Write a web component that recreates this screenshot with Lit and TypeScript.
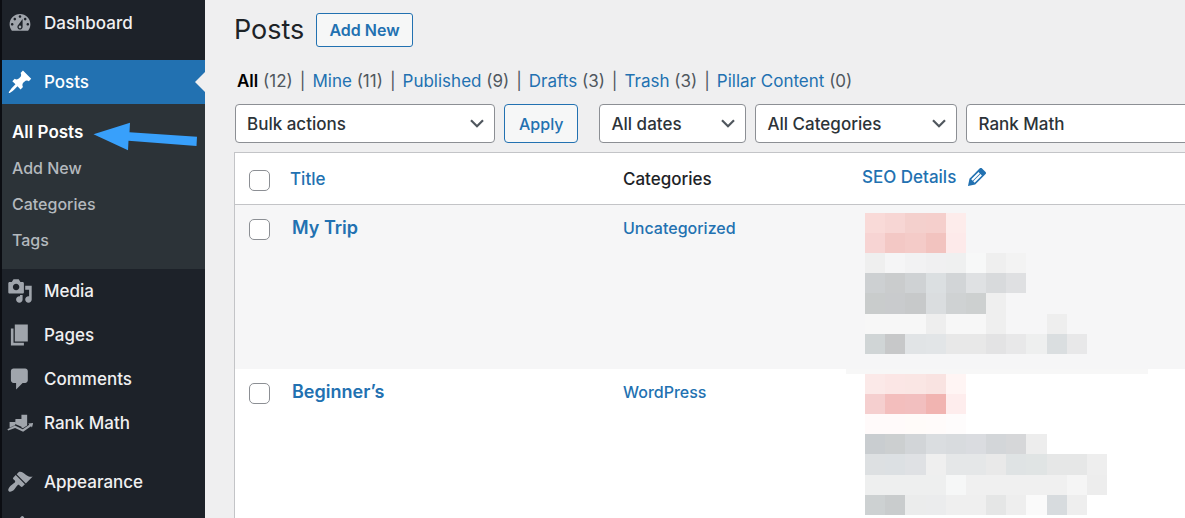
import { LitElement, html, css, svg } from "lit";
import { customElement, property } from "lit/decorators.js";
import { classMap } from "lit/directives/class-map.js";

const ICONS: Record<string, string> = {
  dashboard:
    "M3.76 16h12.48c1.1-1.37 1.76-3.11 1.76-5 0-4.42-3.58-8-8-8s-8 3.58-8 8c0 1.89.66 3.63 1.76 5zM10 4c.55 0 1 .45 1 1s-.45 1-1 1-1-.45-1-1 .45-1 1-1zM6 6c.55 0 1 .45 1 1s-.45 1-1 1-1-.45-1-1 .45-1 1-1zm8 0c.55 0 1 .45 1 1s-.45 1-1 1-1-.45-1-1 .45-1 1-1zm-5.37 5.55L12 7v6c0 1.1-.9 2-2 2s-2-.9-2-2c0-.57.24-1.08.63-1.45zM4 10c.55 0 1 .45 1 1s-.45 1-1 1-1-.45-1-1 .45-1 1-1zm12 0c.55 0 1 .45 1 1s-.45 1-1 1-1-.45-1-1 .45-1 1-1zm-5 3c0-.55-.45-1-1-1s-1 .45-1 1 .45 1 1 1 1-.45 1-1z",
  pin: "M10.44 3.02l1.82-1.82 6.36 6.35-1.83 1.82c-1.05-.68-2.48-.57-3.41.36l-.75.75c-.92.93-1.04 2.35-.35 3.41l-1.83 1.82-2.41-2.41-2.8 2.79c-.42.42-3.38 2.71-3.8 2.29s1.86-3.39 2.28-3.81l2.79-2.79L4.1 9.36l1.83-1.82c1.05.69 2.48.57 3.4-.36l.75-.75c.93-.92 1.05-2.35.36-3.41z",
  media:
    "M13 11V4c0-.55-.45-1-1-1h-1.67L9 1H5L3.67 3H2c-.55 0-1 .45-1 1v7c0 .55.45 1 1 1h10c.55 0 1-.45 1-1zM7 4.5c1.38 0 2.5 1.12 2.5 2.5S8.38 9.5 7 9.5 4.5 8.38 4.5 7 5.62 4.5 7 4.5zM14 6h5v10.5c0 1.38-1.12 2.5-2.5 2.5S14 17.88 14 16.5s1.12-2.5 2.5-2.5c.17 0 .34.02.5.05V9h-3V6zm-4 8.05V13h2v3.5c0 1.38-1.12 2.5-2.5 2.5S7 17.88 7 16.5 8.12 14 9.5 14c.17 0 .34.02.5.05z",
  page: "M6 15V2h10v13H6zm-1 1h8v2H3V5h2v11z",
  comment:
    "M5 2h9c1.1 0 2 .9 2 2v7c0 1.1-.9 2-2 2h-2l-5 5v-5H5c-1.1 0-2-.9-2-2V4c0-1.1.9-2 2-2z",
  rank: "M2 9.2h4.3v2.3l-4.3 2.1zM6.500 7h4.600v5.800L6.300 10.800zM11.100 3.600h4.400v8.300l-3.300 2.200-1.100-.6zM.3 14.900L6.100 12l6 2.900 5-3.600-.7-.9 3.800-.5-1 3.500-.7-.9-6.100 4.300-6.200-3-5.300 1.900z",
  brush:
    "M14.48 11.06L7.41 3.99l1.5-1.5c.5-.56 2.3-.47 3.51.32 1.21.8 1.43 1.28 2.91 2.1 1.18.64 2.45 1.26 4.45.85zm-.71.71L6.7 4.7 4.93 6.47c-.39.39-.39 1.02 0 1.41l1.06 1.06c.39.39.39 1.03 0 1.42-.6.6-1.43 1.11-2.21 1.69-.35.26-.7.53-1.01.84C1.43 14.23.4 16.08 1.4 17.07c.99 1 2.84-.03 4.18-1.36.31-.31.58-.66.85-1.02.57-.78 1.08-1.61 1.69-2.21.39-.39 1.02-.39 1.41 0l1.06 1.06c.39.39 1.02.39 1.41 0z",
  plug: "M13.11 4.36L9.87 7.6 8 5.73l3.24-3.24c.35-.34 1.05-.2 1.56.32.52.51.66 1.21.31 1.55zm-8 1.77l.91-1.12 9.01 9.01-1.19.84c-.71.71-2.63 1.16-3.82 1.16H6.14L4.9 17.26c-.59.59-1.54.59-2.12 0-.59-.58-.59-1.53 0-2.12l1.24-1.24v-3.88c0-1.13.4-3.19 1.09-3.89zm7.26 3.97l3.24-3.24c.34-.35 1.04-.21 1.55.31.52.51.66 1.21.31 1.55l-3.24 3.25z",
  pencil:
    "M13.89 3.39l2.71 2.72c.46.46.42 1.24.03 1.64l-8.01 8.02-5.56 1.16 1.16-5.58s7.6-7.63 7.99-8.03c.39-.39 1.22-.39 1.68.07zm-2.73 2.79l-5.59 5.61 1.11 1.11 5.54-5.65zm-2.97 8.23l5.58-5.6-1.07-1.08-5.59 5.6z",
};

const icon = (name: string) =>
  html`<svg class="icon" viewBox="0 0 20 20" aria-hidden="true"><path fill="currentColor" fill-rule="evenodd" d=${ICONS[name]} /></svg>`;

/* Redacted score blocks: one string per line of blocks, "-" leaves a gap. */
interface Mosaic {
  top: number;
  band: boolean;
  rows: string[];
}

const MOSAIC_TRIP: Mosaic = {
  top: 8,
  band: false,
  rows: [
    "f9dad8 f7d6d4 f4d0cd f5cfcc fdeceb",
    "f7d4d3 f3c8c5 f4cbc8 f2c3bf fdeaea",
    "efefef f5f5f6 f2f2f3 f0f0f1 eff0f0 f7f8f8 efefef f3f3f3",
    "cdd0d2 cacccd cfd2d4 dbdfe1 d2d5d7 dfe1e3 d8dadc dfe0e2",
    "c9cccc c9cbcd c7c9ca dadddf cfd2d3 cdd0d0 efefef",
    "f7f7f7 f7f7f7 f7f7f7 eeeeee f7f7f7 f7f7f7 efefef - - eeeeee",
    "d0d5d6 c7c8c9 e1e4e6 e2e5e7 e8e8e8 e8e8e8 e3e3e4 e8e8e9 eeefef dadee0 e8e8e9",
  ],
};

const MOSAIC_BEGINNER: Mosaic = {
  top: 5,
  band: true,
  rows: [
    "fbe9e8 fbe6e5 fae6e4 f9e3e1 fff5f4",
    "f5cfcf f3bebd f2bfbf f1b4b1 feeded",
    "fffafa fffafa fffbf9 fffbfa fefcfc",
    "c9cdd0 cccfd0 d2d5d8 dadde0 d8dbde dadce0 d3d6d9 d6d7d9 ededed",
    "dde0e2 dce0e3 dfe1e4 efefef e5e7e8 e5e7e8 e9e9e9 dfe3e4 e0e4e4 e6e7e7 e6e7e7 eeeeee",
    "eeefef eeefef eeefef eeefef f6f7f7 f0f0f0 f0f0f0 f0f0f0 f0f0f0 f0f0f0 f5f5f5 ededed",
    "cdd1d2 c9cccd ebecec ebeced efefef efefef e5e6e6 eeeeee fafafa d7dbde eeeeee",
  ],
};

const mosaic = (m: Mosaic) => html`
  <svg class="mosaic" viewBox="0 0 302 164" shape-rendering="crispEdges" role="img" aria-label="SEO details hidden">
    ${m.band ? svg`<rect width="302" height="5" fill="#f7f7f7" />` : ""}
    ${m.rows.map((row, r) =>
      row.split(" ").map((c, i) => {
        if (c === "-") return "";
        const x = Math.round(19 + i * 20.17);
        const y = Math.round(m.top + r * 20.1);
        return svg`<rect x=${x} y=${y} width=${Math.round(19 + (i + 1) * 20.17) - x}
          height=${Math.round(m.top + (r + 1) * 20.1) - y} fill=${"#" + c} />`;
      })
    )}
  </svg>
`;

@customElement("admin-menu")
export class AdminMenu extends LitElement {
  static styles = css`
    :host {
      display: block;
      position: relative;
      background: #1d2229;
      border-left: 2px solid #0b0d12;
      overflow: hidden;
    }
    ul {
      list-style: none;
      margin: 0;
      padding: 0;
    }
    .menu {
      padding-top: 1px;
    }
    a {
      color: #f0f0f1;
      text-decoration: none;
    }
    .item {
      display: flex;
      align-items: center;
      gap: 11px;
      height: 44px;
      padding-left: 5px;
      font-size: 17px;
      position: relative;
    }
    .icon {
      width: 26px;
      height: 26px;
      flex: none;
      color: #a0a5ac;
    }
    .spaced {
      margin-top: 15px;
    }
    .current {
      background: #2271b1;
      color: #fff;
    }
    .current .icon {
      color: #fff;
    }
    .current::after {
      content: "";
      position: absolute;
      right: 0;
      top: 12px;
      border: 10px solid transparent;
      border-left-width: 0;
      border-right-color: #efeff0;
    }
    .submenu {
      background: #2c3338;
      padding: 10px 0 11px 10px;
      font-size: 16px;
      line-height: 36px;
    }
    .submenu a {
      display: block;
      color: #b4b9be;
    }
    .submenu .active {
      color: #fff;
      font-size: 17px;
      font-weight: 600;
    }
    .arrow {
      position: absolute;
      left: 91px;
      top: 122px;
      width: 105px;
      height: 29px;
    }
  `;

  private entry(name: string, label: string, cls: Record<string, boolean> = {}) {
    return html`<a href="#" class=${classMap({ item: true, ...cls })}>${icon(name)}<span>${label}</span></a>`;
  }

  render() {
    return html`
      <nav aria-label="Main menu">
        <ul class="menu">
          <li>${this.entry("dashboard", "Dashboard")}</li>
          <li>
            ${this.entry("pin", "Posts", { spaced: true, current: true })}
            <ul class="submenu">
              <li><a href="#" class="active">All Posts</a></li>
              <li><a href="#">Add New</a></li>
              <li><a href="#">Categories</a></li>
              <li><a href="#">Tags</a></li>
            </ul>
          </li>
          <li>${this.entry("media", "Media")}</li>
          <li>${this.entry("page", "Pages")}</li>
          <li>${this.entry("comment", "Comments")}</li>
          <li>${this.entry("rank", "Rank Math")}</li>
          <li>${this.entry("brush", "Appearance", { spaced: true })}</li>
          <li><a href="#" class="item" aria-label="Plugins">${icon("plug")}</a></li>
        </ul>
      </nav>
      <svg class="arrow" viewBox="0 0 105 29" aria-hidden="true">
        <path fill="#38a0fb" d="M.5 12.3L37 .8l-.5 9.400L104 14.800l-.5 9.200L35.500 18.800l-.5 9.500z" />
      </svg>
    `;
  }
}

@customElement("filter-select")
export class FilterSelect extends LitElement {
  @property() label = "";
  @property() value = "";

  static styles = css`
    :host {
      display: grid;
      flex: none;
    }
    select,
    svg {
      grid-area: 1 / 1;
    }
    select {
      appearance: none;
      box-sizing: border-box;
      width: 100%;
      height: 39px;
      margin: 0;
      padding: 0 32px 0 11px;
      border: 1px solid #8c8f94;
      border-radius: 4px;
      background: #fff;
      color: #2c3338;
      font: inherit;
    }
    svg {
      width: 14px;
      height: 9px;
      justify-self: end;
      align-self: center;
      margin-right: 11px;
      pointer-events: none;
    }
  `;

  render() {
    return html`
      <select aria-label=${this.label}><option>${this.value}</option></select>
      <svg viewBox="0 0 14 9" aria-hidden="true"><path d="M1 1.200l6 6 6-6" fill="none" stroke="#50575e" stroke-width="2.200" /></svg>
    `;
  }
}

const VIEWS: [string, number][] = [
  ["All", 12],
  ["Mine", 11],
  ["Published", 9],
  ["Drafts", 3],
  ["Trash", 3],
  ["Pillar Content", 0],
];

const POSTS = [
  { title: "My Trip", category: "Uncategorized", seo: MOSAIC_TRIP },
  { title: "Beginner’s", category: "WordPress", seo: MOSAIC_BEGINNER },
];

@customElement("app-root")
export class AppRoot extends LitElement {
  static styles = css`
    :host {
      display: grid;
      grid-template-columns: 205px minmax(0, 1fr);
      height: 100vh;
      overflow: hidden;
      background: #efeff0;
      color: #1d2327;
      font-family: Inter, "Liberation Sans", sans-serif;
      font-size: 16px;
      font-weight: 500;
    }
    a {
      color: #2271b1;
      text-decoration: none;
    }
    main {
      padding: 12px 0 0 29px;
      overflow: hidden;
    }
    .heading {
      display: flex;
      align-items: center;
      gap: 12px;
    }
    h1 {
      margin: 0;
      font-size: 27px;
      font-weight: 400;
      line-height: 35px;
    }
    .add {
      box-sizing: border-box;
      height: 34px;
      padding: 0 12px;
      border: 1px solid #2271b1;
      border-radius: 3px;
      background: #f6f7f7;
      font-size: 16px;
      font-weight: 600;
      line-height: 32px;
    }
    .views {
      display: flex;
      list-style: none;
      margin: 23px 0 0;
      padding: 0 0 0 3px;
      font-size: 17px;
      font-weight: 400;
      line-height: 22px;
      color: #50575e;
    }
    .views li + li::before {
      content: "|";
      margin: 0 7px;
    }
    .views .current {
      color: #000;
      font-weight: 600;
    }
    .filters {
      display: flex;
      gap: 9px;
      margin-top: 12px;
      padding-left: 1px;
      font-size: 17px;
    }
    .bulk {
      width: 260px;
    }
    .dates {
      width: 147px;
      margin-left: 12px;
    }
    .cats {
      width: 202px;
    }
    .rank {
      width: 260px;
    }
    .apply {
      flex: none;
      height: 39px;
      padding: 0 14px;
      border: 1px solid #2271b1;
      border-radius: 4px;
      background: #f6f7f7;
      color: #2271b1;
      font: inherit;
      font-size: 16px;
    }
    table {
      width: 100%;
      margin-top: 9px;
      table-layout: fixed;
      border-spacing: 0;
      border: solid #c3c4c7;
      border-width: 1px 0 0 1px;
      background: #fff;
    }
    th,
    td {
      padding: 0;
      text-align: left;
      vertical-align: top;
      font-weight: 500;
      line-height: 22px;
    }
    thead th {
      height: 51px;
      border-bottom: 1px solid #c3c4c7;
      vertical-align: middle;
      font-size: 17px;
    }
    thead th.col-check {
      width: 55px;
      height: 48px;
      padding-top: 3px;
    }
    .col-title {
      width: 333px;
    }
    .col-cats {
      width: 223px;
    }
    tbody tr {
      height: 164px;
    }
    tbody tr:nth-child(odd) {
      background: #f6f6f7;
    }
    tbody td {
      padding-top: 12px;
    }
    tbody td.check {
      padding-top: 14px;
    }
    tbody td.seo {
      padding-top: 0;
    }
    .name {
      padding-left: 2px;
      font-size: 18px;
      font-weight: 600;
    }
    input {
      display: block;
      appearance: none;
      box-sizing: border-box;
      width: 21px;
      height: 21px;
      margin: 0 0 0 14px;
      border: 1px solid #8c8f94;
      border-radius: 5px;
      background: #fff;
    }
    .details {
      display: flex;
      align-items: center;
      gap: 8px;
      padding: 0 0 4px 16px;
    }
    .details .icon {
      width: 26px;
      height: 26px;
      color: #2271b1;
    }
    .mosaic {
      display: block;
      width: 302px;
      height: 164px;
    }
  `;

  render() {
    return html`
      <admin-menu></admin-menu>
      <main>
        <div class="heading">
          <h1>Posts</h1>
          <a href="#" class="add">Add New</a>
        </div>
        <ul class="views">
          ${VIEWS.map(
            ([name, count], i) =>
              html`<li><a href="#" class=${classMap({ current: i === 0 })}>${name}</a> (${count})</li>`
          )}
        </ul>
        <div class="filters">
          <filter-select class="bulk" label="Bulk actions" value="Bulk actions"></filter-select>
          <button type="button" class="apply">Apply</button>
          <filter-select class="dates" label="Filter by date" value="All dates"></filter-select>
          <filter-select class="cats" label="Filter by category" value="All Categories"></filter-select>
          <filter-select class="rank" label="Filter by SEO" value="Rank Math"></filter-select>
        </div>
        <table>
          <thead>
            <tr>
              <th class="col-check" scope="col"><input type="checkbox" aria-label="Select all" /></th>
              <th class="col-title" scope="col"><a href="#">Title</a></th>
              <th class="col-cats" scope="col">Categories</th>
              <th scope="col"><a href="#" class="details">SEO Details ${icon("pencil")}</a></th>
            </tr>
          </thead>
          <tbody>
            ${POSTS.map(
              (p) => html`
                <tr>
                  <td class="check"><input type="checkbox" aria-label=${"Select " + p.title} /></td>
                  <td><a href="#" class="name">${p.title}</a></td>
                  <td><a href="#">${p.category}</a></td>
                  <td class="seo">${mosaic(p.seo)}</td>
                </tr>
              `
            )}
          </tbody>
        </table>
      </main>
    `;
  }
}
